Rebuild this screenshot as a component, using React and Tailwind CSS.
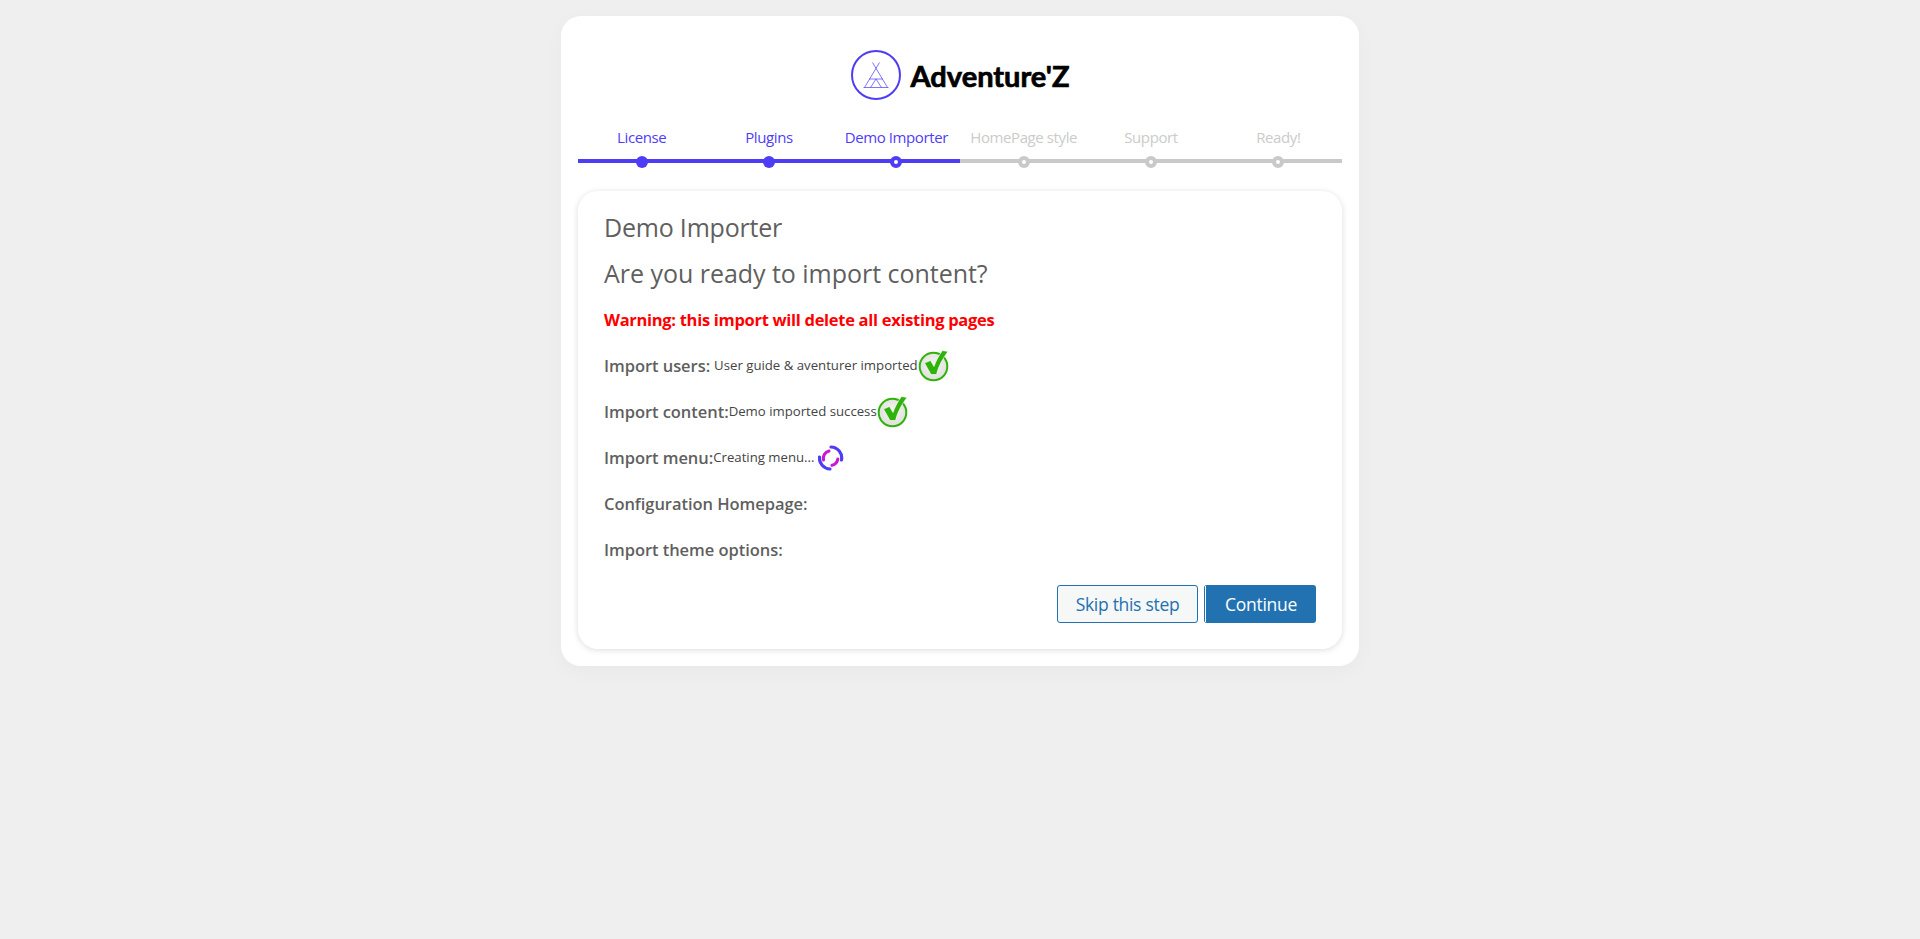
import React from 'react';

const steps = [
  { label: 'License', state: 'done' },
  { label: 'Plugins', state: 'done' },
  { label: 'Demo Importer', state: 'current' },
  { label: 'HomePage style', state: 'todo' },
  { label: 'Support', state: 'todo' },
  { label: 'Ready!', state: 'todo' },
];

function TipiLogo() {
  return (
    <svg width="50" height="50" viewBox="0 0 50 50" fill="none" className="shrink-0">
      <circle cx="25" cy="25" r="24" stroke="#4f3df5" strokeWidth="2" />
      <g stroke="#4f3df5" strokeWidth="0.9" opacity="0.8">
        <path d="M21.5 12.5 L36.5 37.5 M28.5 12.5 L13.5 37.5 M12.5 37.5 H37.5 M18 29 H32 M25 29 L19.5 37.5 M25 29 L30.5 37.5" />
      </g>
    </svg>
  );
}

function CheckIcon() {
  return (
    <svg width="32" height="32" viewBox="0 0 32 32" className="shrink-0">
      <defs>
        <radialGradient id="checkFill" cx="50%" cy="45%" r="60%">
          <stop offset="0%" stopColor="#f7f7f5" />
          <stop offset="100%" stopColor="#dcdcd8" />
        </radialGradient>
      </defs>
      <circle cx="15.5" cy="16.5" r="13.8" fill="url(#checkFill)" stroke="#2fb30a" strokeWidth="2" />
      <path
        d="M6.5 13 L12.5 10.5 L16 16.5 C18 11 21 5 24.5 0.5 L30 1.5 C25 8 20.5 16 18.5 24.5 L13 24.5 Z"
        fill="#2fb30a"
        stroke="#ffffff"
        strokeWidth="0.6"
      />
    </svg>
  );
}

function SpinnerIcon() {
  return (
    <svg width="26" height="26" viewBox="0 0 26 26" fill="none" className="shrink-0">
      <path d="M13 2 A11 11 0 0 1 23.5 15" stroke="#4f3df5" strokeWidth="3.2" strokeLinecap="round" />
      <path d="M12 24 A11 11 0 0 1 1.5 12" stroke="#4f3df5" strokeWidth="3.2" strokeLinecap="round" />
      <path d="M5.5 15 A7.5 7.5 0 0 1 11 6" stroke="#c818d8" strokeWidth="3" strokeLinecap="round" />
      <path d="M19.8 14 A7.5 7.5 0 0 1 14 20.3" stroke="#c818d8" strokeWidth="3" strokeLinecap="round" />
    </svg>
  );
}

function Row({ label, detail, icon, gap }) {
  return (
    <div className="flex h-[46px] items-center text-[#5f5f5f]">
      <span className="text-[16.5px] font-semibold tracking-[-0.05px]">{label}</span>
      {detail && <span className={`text-[13.2px] text-[#444] ${gap ? 'ml-1' : ''}`}>{detail}</span>}
      {icon}
    </div>
  );
}

export default function App() {
  return (
    <div
      className="min-h-[939px] bg-[#efefef] pt-4"
      style={{ fontFamily: '"Open Sans", "Noto Sans", sans-serif' }}
    >
      <div className="mx-auto w-[798px] rounded-[20px] bg-white p-[17px] shadow-[0_5px_20px_rgba(0,0,0,0.03)]">
        {/* Logo */}
        <div className="flex items-center justify-center gap-[10px] pt-[17px]">
          <TipiLogo />
          <span
            className="text-[29px] leading-none font-bold text-black"
            style={{ fontFamily: '"Lato", sans-serif', WebkitTextStroke: '0.7px #000' }}
          >
            Adventure'Z
          </span>
        </div>

        {/* Steps */}
        <div className="mt-[24px] grid grid-cols-6">
          {steps.map((step) => (
            <div key={step.label} className="flex flex-col items-center">
              <span
                className={`mb-[9px] flex h-[26px] items-center text-[15px] tracking-[-0.4px] ${
                  step.state === 'todo' ? 'text-[#cbcbcb]' : 'text-[#4f3df5]'
                }`}
              >
                {step.label}
              </span>
              <div
                className={`flex h-[4px] w-full items-center justify-center ${
                  step.state === 'todo' ? 'bg-[#c9c9c9]' : 'bg-[#4f3df5]'
                }`}
              >
                {step.state === 'done' && (
                  <span className="h-[12px] w-[12px] shrink-0 translate-y-px rounded-full bg-[#4f3df5]" />
                )}
                {step.state === 'current' && (
                  <span className="h-[12px] w-[12px] shrink-0 translate-y-px rounded-full border-[4px] border-[#4f3df5] bg-white" />
                )}
                {step.state === 'todo' && (
                  <span className="h-[12px] w-[12px] shrink-0 translate-y-px rounded-full border-[4px] border-[#c9c9c9] bg-white" />
                )}
              </div>
            </div>
          ))}
        </div>

        {/* Content */}
        <div className="mt-[28px] rounded-[20px] bg-white px-[26px] pt-[14px] pb-[26px] shadow-[0_1px_6px_rgba(0,0,0,0.14)]">
          <h1 className="flex h-[46px] items-center text-[25px] tracking-[-0.2px] text-[#5f5f5f]">Demo Importer</h1>
          <h2 className="flex h-[46px] items-center text-[25px] tracking-[-0.03px] text-[#5f5f5f]">
            Are you ready to import content?
          </h2>
          <div className="flex h-[46px] items-center text-[16.5px] font-bold tracking-[-0.3px] text-[#ff0000]">
            Warning: this import will delete all existing pages
          </div>
          <Row label="Import users:" detail="User guide & aventurer imported" gap icon={<CheckIcon />} />
          <Row label="Import content:" detail="Demo imported success" icon={<CheckIcon />} />
          <Row
            label="Import menu:"
            detail="Creating menu..."
            icon={<span className="ml-[3px]"><SpinnerIcon /></span>}
          />
          <Row label="Configuration Homepage:" />
          <Row label="Import theme options:" />

          <div className="mt-[12px] flex justify-end gap-[6px]">
            <button className="h-[38px] w-[141px] rounded-[3px] border border-[#2271b1] bg-[#f6f7f7] text-[17.5px] tracking-[-0.3px] text-[#2271b1]">
              Skip this step
            </button>
            {/* the primary button keeps a thin white line just inside its left edge */}
            <div className="flex h-[38px] w-[112px] rounded-[3px] bg-[#2271b1] py-[1px] pl-[1px]">
              <span className="h-full w-[1px] bg-white" />
              <button className="flex-1 text-[17.5px] tracking-[-0.3px] text-white">
                Continue
              </button>
            </div>
          </div>
        </div>
      </div>
    </div>
  );
}
